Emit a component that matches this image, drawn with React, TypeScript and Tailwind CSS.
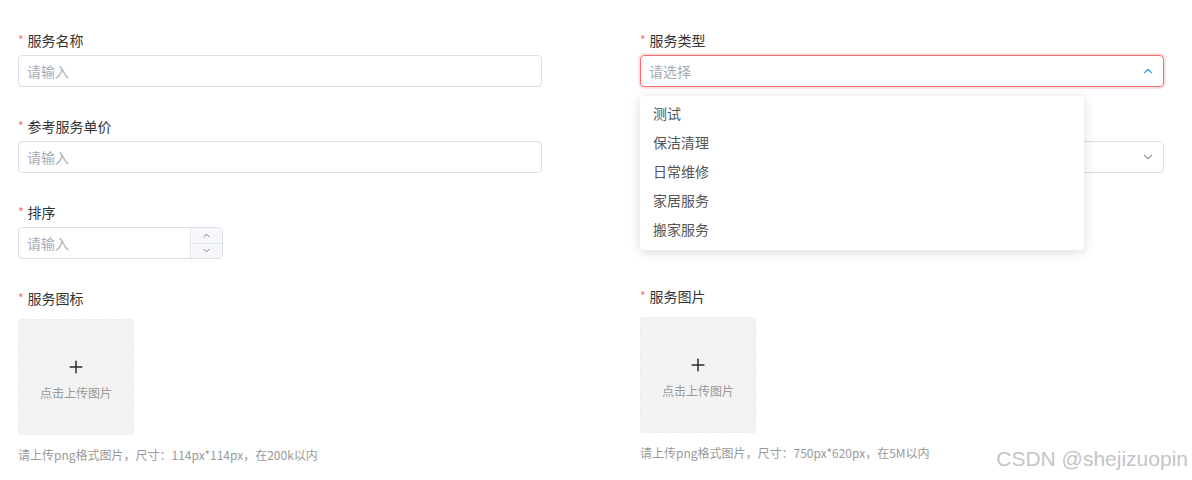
import { ChevronDown, ChevronUp, Plus } from "lucide-react";

const font = { fontFamily: '"Noto Sans CJK SC", "Liberation Sans", sans-serif' };

function Label({ text }: { text: string }) {
  return (
    <div className="flex items-center h-5 text-sm text-[#333]">
      <span className="text-[#f56c6c] mr-[4px] text-xs">*</span>
      {text}
    </div>
  );
}

function TextInput() {
  return (
    <div className="h-8 w-full border border-[#dcdfe6] rounded-[4px] flex items-center px-[8px] text-sm text-[#a8abb2]">
      请输入
    </div>
  );
}

function Upload({ hint }: { hint: string }) {
  return (
    <div>
      <div className="w-[116px] h-[116px] bg-[#f2f2f2] border border-dashed border-[#ebebeb] rounded-[4px] flex flex-col items-center justify-center">
        <Plus size={20} strokeWidth={1.8} className="text-[#2b2b2b] mt-[4px]" />
        <div className="text-xs text-[#999] mt-[8px]">点击上传图片</div>
      </div>
      <div className="text-xs text-[#999] mt-[12px]">{hint}</div>
    </div>
  );
}

const options = ["测试", "保洁清理", "日常维修", "家居服务", "搬家服务"];

export default function App() {
  return (
    <div className="relative w-[1192px] h-[480px] bg-white overflow-hidden" style={font}>
      <div className="grid grid-cols-[524px_524px] gap-x-[98px] pl-[18px] pt-[30px]">
        {/* left column */}
        <div className="flex flex-col">
          <Label text="服务名称" />
          <div className="mt-[5px] mb-[29px]">
            <TextInput />
          </div>
          <Label text="参考服务单价" />
          <div className="mt-[5px] mb-[29px]">
            <TextInput />
          </div>
          <Label text="排序" />
          <div className="mt-[5px] mb-[29px] w-[205px] h-8 border border-[#dcdfe6] rounded-[4px] flex overflow-hidden">
            <div className="flex-1 flex items-center px-[8px] text-sm text-[#a8abb2]">请输入</div>
            <div className="w-[32px] flex flex-col bg-[#f5f7fa] border-l border-[#e4e7ed]">
              <div className="flex-1 flex items-center justify-center border-b border-[#e4e7ed]">
                <ChevronUp size={11} className="text-[#777]" />
              </div>
              <div className="flex-1 flex items-center justify-center">
                <ChevronDown size={11} className="text-[#777]" />
              </div>
            </div>
          </div>
          <Label text="服务图标" />
          <div className="mt-[11px]">
            <Upload hint="请上传png格式图片，尺寸：114px*114px，在200k以内" />
          </div>
        </div>

        {/* right column */}
        <div className="flex flex-col">
          <Label text="服务类型" />
          <div className="relative mt-[5px] mb-[29px]">
            <div className="h-8 w-full border border-[#f56c6c] rounded-[4px] shadow-[0_0_0_2px_rgba(245,108,108,0.2)] flex items-center justify-between px-[8px] text-sm text-[#a8abb2]">
              请选择
              <ChevronUp size={14} className="text-[#409eff]" />
            </div>
            <div className="absolute z-10 left-0 top-[41px] w-[444px] bg-white rounded-[4px] shadow-[0_2px_12px_rgba(0,0,0,0.15)] pt-[2px] pb-[7px]">
              {options.map((o) => (
                <div key={o} className="h-[29px] flex items-center px-[13px] text-sm text-[#555]">
                  {o}
                </div>
              ))}
            </div>
          </div>
          {/* label of the second select lies under the open menu */}
          <div className="h-5" />
          <div className="mt-[5px] mb-[29px] h-8 w-full border border-[#dcdfe6] rounded-[4px] flex items-center justify-end px-[8px]">
            <ChevronDown size={14} className="text-[#999]" />
          </div>
          <div className="h-5" />
          <div className="mt-[5px] mb-[27px] h-8" />
          <Label text="服务图片" />
          <div className="mt-[11px]">
            <Upload hint="请上传png格式图片，尺寸：750px*620px，在5M以内" />
          </div>
        </div>
      </div>

      <div
        className="absolute right-[4px] bottom-[6px] text-[21px] text-[#c4c4c4] [text-shadow:0_0_1px_#fff]"
        style={{ fontFamily: '"Liberation Sans", sans-serif' }}
      >
        CSDN @shejizuopin
      </div>
    </div>
  );
}
